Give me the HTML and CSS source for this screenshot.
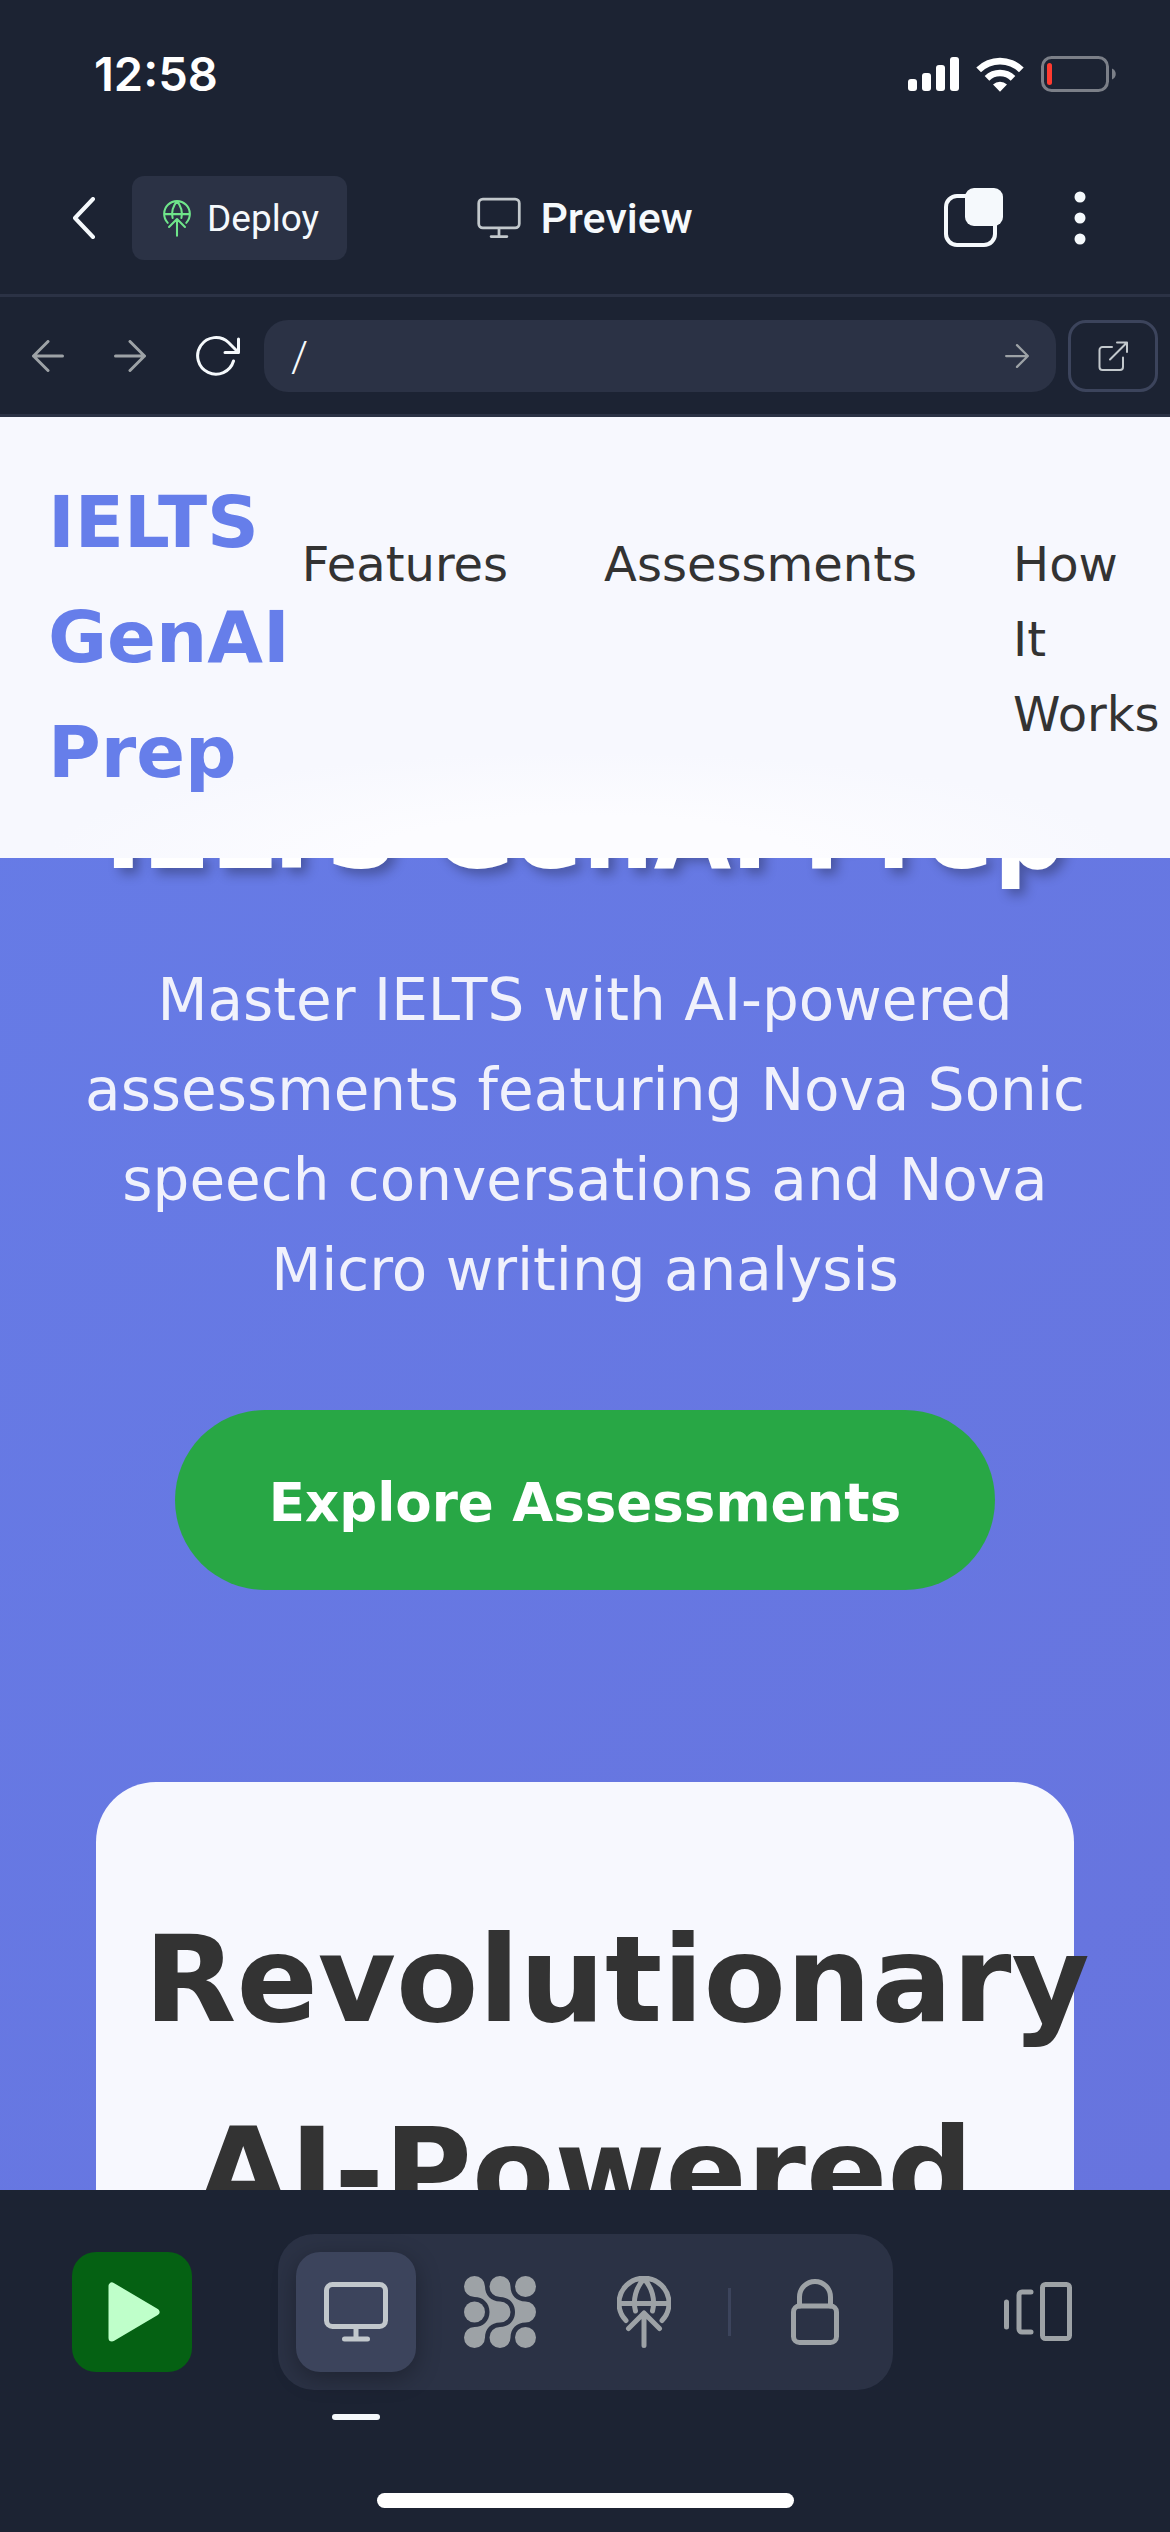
FILE: index.html
```html
<!DOCTYPE html>
<html lang="en">
<head>
<meta charset="utf-8">
<meta name="viewport" content="width=device-width, initial-scale=1">
<title>Preview</title>
<link rel="stylesheet" href="styles.css">
</head>
<body>
<svg class="defs" aria-hidden="true">
  <symbol id="monitor" viewBox="0 0 64 60">
    <rect x="2.5" y="2.5" width="59" height="42" rx="6"/><path d="M32 45v12M20.500 57h23"/>
  </symbol>
  <symbol id="globe-up" viewBox="0 0 54 72">
    <path d="M9 44.500A25 25 0 1 1 45 44.500M2 27.500h50M18.500 35C15.500 24 19 11 27 3c8 8 11.500 21 8.500 32M27 37v32.500M11.500 52.500 27 37l15.500 15.500"/>
  </symbol>
  <symbol id="arrow" viewBox="0 0 32 32">
    <path d="M1.500 16h29M16 1.500 30.500 16 16 30.500"/>
  </symbol>
</svg>

<div class="status">
  <time class="clock">12:58</time>
  <div class="status-icons">
    <svg class="solid" width="51" height="36" viewBox="0 0 51 36">
      <rect x="0" y="23" width="9" height="12" rx="3"/><rect x="14" y="17" width="9" height="18" rx="3"/>
      <rect x="28" y="9" width="9" height="26" rx="3"/><rect x="42" y="1" width="9" height="34" rx="3"/>
    </svg>
    <svg class="solid" width="50" height="36" viewBox="0 0 50 36">
      <path d="M1.300 11.500a33.500 33.500 0 0 1 47.400 0L44 16.200a27 27 0 0 0-38 0zM9.700 20a21.700 21.700 0 0 1 30.600 0l-4.600 4.700a15.200 15.200 0 0 0-21.400 0zM18 28.500a10 10 0 0 1 14 0l-7 7.200z"/>
    </svg>
    <svg class="battery" width="75" height="36" viewBox="0 0 75 36">
      <rect x="1.500" y="1.500" width="65" height="33" rx="9"/>
      <path class="battery-nub" d="M71 12.500c5 2 5 9 0 11z"/><rect class="battery-level" x="6" y="7" width="5" height="22" rx="2.500"/>
    </svg>
  </div>
</div>

<header class="topbar">
  <div class="side">
    <button class="icon-button" aria-label="Back">
      <svg width="24" height="42" viewBox="0 0 24 42"><path d="M21 2 3 21l18 19"/></svg>
    </button>
    <button class="deploy">
      <svg width="28" height="37"><use href="#globe-up"/></svg>
      Deploy
    </button>
  </div>
  <h1 class="title"><svg width="44" height="42"><use href="#monitor"/></svg>Preview</h1>
  <div class="side side-end">
    <button class="icon-button" aria-label="Tabs">
      <svg width="60" height="60" viewBox="0 0 60 60"><rect x="2" y="8" width="49" height="49" rx="11"/><rect class="solid" x="21" y="0" width="38" height="38" rx="9"/></svg>
    </button>
    <button class="icon-button" aria-label="More">
      <svg class="solid" width="12" height="54" viewBox="0 0 12 54"><circle cx="6" cy="6" r="5.500"/><circle cx="6" cy="27" r="5.500"/><circle cx="6" cy="48" r="5.500"/></svg>
    </button>
  </div>
</header>

<form class="browser">
  <div class="history">
    <button type="button" class="icon-button dim flip" aria-label="Go back"><svg width="32" height="32"><use href="#arrow"/></svg></button>
    <button type="button" class="icon-button dim" aria-label="Go forward"><svg width="32" height="32"><use href="#arrow"/></svg></button>
    <button type="button" class="icon-button reload" aria-label="Reload">
      <svg width="44" height="42" viewBox="0 0 44 42"><path d="M37.500 26A18.300 18.300 0 1 1 32.500 7.500L42 17M42.500 4V17.500H29"/></svg>
    </button>
  </div>
  <div class="address">
    <input type="text" value="/" aria-label="Address">
    <button class="icon-button dim" aria-label="Go"><svg width="24" height="24"><use href="#arrow"/></svg></button>
  </div>
  <button type="button" class="external" aria-label="Open in new tab">
    <svg width="30" height="30" viewBox="0 0 30 30"><path d="M14 6H4.500A3 3 0 0 0 1.500 9v17a3 3 0 0 0 3 3H22a3 3 0 0 0 3-3V16.500M12 18.500 28.500 2M19 1.500h10V11"/></svg>
  </button>
</form>

<main class="preview">
  <nav class="site-nav">
    <a class="logo" href="#">IELTS GenAI Prep</a>
    <ul class="links">
      <li><a href="#">Features</a></li>
      <li><a href="#">Assessments</a></li>
      <li><a href="#">How It Works</a></li>
    </ul>
  </nav>
  <section class="hero">
    <h2>IELTS GenAI Prep</h2>
    <p>Master IELTS with AI-powered assessments featuring Nova Sonic speech conversations and Nova Micro writing analysis</p>
    <a class="cta" href="#">Explore Assessments</a>
  </section>
  <section class="card">
    <h2>Revolutionary AI-Powered</h2>
  </section>
</main>

<footer class="dock">
  <div class="tools">
    <button class="tool run" aria-label="Run">
      <svg width="52" height="66" viewBox="0 0 52 66"><path d="M4 7v52l44-26z"/></svg>
    </button>
    <div class="tabs">
      <button class="tool selected" aria-label="Preview"><svg width="66" height="60"><use href="#monitor"/></svg></button>
      <button class="tool" aria-label="Agent">
        <svg class="solid" width="72" height="72" viewBox="0 0 72 72">
          <circle cx="61.500" cy="10.500" r="10.500"/><circle cx="10.500" cy="36" r="10.500"/><circle cx="61.500" cy="61.500" r="10.500"/>
          <path id="flow" d="M10.500 0A10.500 10.500 0 0 1 21 10.500C21 19 27 25.500 36 25.500A10.500 10.500 0 0 1 36 46.500C27 46.500 21 53 21 61.500A10.500 10.500 0 1 1 10.500 51C19 51 25.500 45 25.500 36S19 21 10.500 21A10.500 10.500 0 0 1 10.500 0z"/>
          <use href="#flow" x="25.500"/>
        </svg>
      </button>
      <button class="tool" aria-label="Deployments"><svg width="54" height="72"><use href="#globe-up"/></svg></button>
      <span class="rule"></span>
      <button class="tool" aria-label="Secrets">
        <svg width="48" height="66" viewBox="0 0 48 66"><rect x="2.500" y="27" width="43" height="36.500" rx="6"/><path d="M8.500 27V18a15.500 15.500 0 0 1 31 0v9"/></svg>
      </button>
    </div>
    <button class="tool" aria-label="All tabs">
      <svg width="68" height="60" viewBox="0 0 68 60"><rect x="38.500" y="2.500" width="27" height="54" rx="3"/><path d="M27 10H18a3 3 0 0 0-3 3v34a3 3 0 0 0 3 3h9M2.500 20v25"/></svg>
    </button>
  </div>
  <span class="marker"></span>
  <span class="home"></span>
</footer>
</body>
</html>
```

FILE: styles.css
```css
* { box-sizing: border-box; }

body {
  margin: 0;
  min-height: 100vh;
  display: flex;
  flex-direction: column;
  background: #1c2333;
  color: #f5f9fc;
  font-family: Roboto, "Noto Sans", sans-serif;
}

button, input { font: inherit; color: inherit; border: 0; background: none; margin: 0; padding: 0; }
h1, h2, p, ul { margin: 0; padding: 0; }
a { color: inherit; text-decoration: none; }
svg { display: block; fill: none; stroke: currentColor; stroke-width: 4; stroke-linecap: round; stroke-linejoin: round; }
.solid { fill: currentColor; stroke: none; }
.defs { display: none; }

/* Status bar */
.status { display: flex; justify-content: space-between; align-items: center; height: 148px; padding: 0 54px 0 94px; color: #fff; }
.clock { font: 600 47px/56px Inter, sans-serif; }
.status-icons { display: flex; gap: 16px; }
.battery { color: #7b7f88; stroke-width: 3; }
.battery-nub { fill: #7b7f88; stroke: none; }
.battery-level { fill: #ff3b30; stroke: none; }

/* App header */
.topbar {
  display: grid;
  grid-template-columns: 1fr auto 1fr;
  align-items: center;
  height: 149px;
  padding-bottom: 6px;
  border-bottom: 3px solid #2b3245;
}
.side { display: flex; align-items: center; gap: 36px; padding-left: 72px; }
.side-end { justify-content: flex-end; gap: 70px; padding: 0 84px 0 0; }
.icon-button { display: flex; }
.deploy { display: flex; align-items: center; gap: 16px; height: 84px; padding: 0 28px 0 31px; border-radius: 12px; background: #2b3245; font-size: 37px; }
.deploy svg { color: #6fe58a; stroke-width: 4; }
.title { display: flex; align-items: center; gap: 19px; font-size: 43px; font-weight: 500; }
.title svg { color: #c2c8cc; }

/* Browser controls */
.browser { display: flex; align-items: center; gap: 12px; height: 120px; padding: 0 12px 0 32px; border-bottom: 3px solid #2b3245; }
.history { display: flex; align-items: center; gap: 50px; padding-right: 12px; }
.dim { color: #9da2a6; }
.dim svg, .reload svg { stroke-width: 3; }
.flip { transform: scaleX(-1); }
.address { flex: 1; display: flex; align-items: center; height: 72px; padding: 0 27px; border-radius: 24px; background: #2b3245; }
.address input { flex: 1; min-width: 0; height: 100%; font-size: 43px; font-weight: 300; outline: 0; }
.external { display: grid; place-items: center; width: 90px; height: 72px; border: 3px solid #3c445c; border-radius: 18px; color: #c2c8cc; }
.external svg { stroke-width: 2; }

/* Previewed site */
.preview {
  position: relative;
  flex: 1 1 0;
  min-height: 0;
  overflow: hidden;
  background: linear-gradient(135deg, #667ce7, #6774de);
  font-family: "DejaVu Sans", Verdana, sans-serif;
}
.site-nav {
  position: absolute;
  inset: 0 0 auto;
  z-index: 1;
  display: flex;
  align-items: center;
  gap: 12px;
  padding: 48px;
  background: radial-gradient(ellipse 46% 24% at 50% 100%, #fcfcff 40%, #f7f8fe) #f7f8fe;
  color: #333;
}
.logo { width: min-content; font-size: 72px; line-height: 115px; font-weight: 700; color: #667eea; }
.links { display: flex; gap: 96px; padding-top: 4px; list-style: none; font-size: 48px; line-height: 75px; }

.hero { display: flex; flex-direction: column; align-items: center; padding: 340px 72px 192px; text-align: center; }
.hero h2 { font-size: 100px; line-height: 154px; white-space: nowrap; color: #fff; text-shadow: 6px 6px 12px rgba(0, 0, 0, 0.3); }
.hero p { margin: 44px 0 95px; font-size: 58px; line-height: 90px; color: #fff; opacity: 0.9; }
.cta { padding: 50px 94px 45px; border-radius: 90px; background: #28a745; color: #fff; font-size: 53px; line-height: 85px; font-weight: 700; }

.card { margin: 0 96px; padding: 102px 48px 96px; border-radius: 60px; background: #f7f8fe; color: #333; text-align: center; }
.card h2 { font-size: 120px; line-height: 192px; }

/* Bottom dock */
.dock { padding: 44px 72px 24px; }
.tools { display: flex; align-items: center; justify-content: space-between; color: #9da2a6; }
.tool { display: grid; place-items: center; width: 120px; height: 120px; border-radius: 24px; }
.tool svg { stroke-width: 5; }
.run { background: #056113; color: #bfffca; }
.run svg { margin-left: 4px; fill: currentColor; stroke-width: 7; }
.tabs { display: flex; align-items: center; gap: 24px; padding: 18px; border-radius: 36px; background: #2b3245; }
.selected { background: #3c445c; color: #c2c8cc; box-shadow: 0 6px 24px rgba(2, 2, 3, 0.3); }
.rule { width: 3px; height: 48px; background: #3c445c; }
.marker { display: block; width: 48px; height: 6px; margin: 24px 0 73px 260px; border-radius: 3px; background: #f5f9fc; }
.home { display: block; width: 417px; height: 15px; margin: 0 auto; border-radius: 8px; background: #fff; }
```
